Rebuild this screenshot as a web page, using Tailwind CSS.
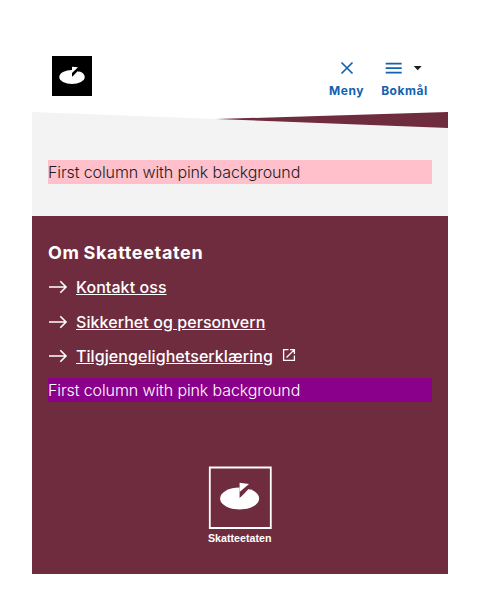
<!DOCTYPE html>
<html lang="nb">
<head>
<meta charset="utf-8">
<title>Skatteetaten</title>
<script src="https://cdn.jsdelivr.net/npm/@tailwindcss/browser@4"></script>
</head>
<body class="bg-white p-8 font-['Inter',sans-serif] text-base text-[#1d1d1d]">
<header class="flex h-20 items-start justify-between pt-6 pr-5 pl-5">
  <svg class="block size-10" viewBox="0 0 40 40"><path fill="#000" d="M0 0h40v40H0z"/><ellipse cx="20" cy="21" rx="12.700" ry="6.900" fill="#fff"/><path d="M20 20.500V11h6l2.500 3.500-8 6z" fill="#000"/><path d="M20 10.800l6 .5-6 5.700zM25.500 15.300l3.500 1.500-9 4.500z" fill="#fff"/></svg>
  <nav class="flex gap-4 text-xs leading-4 font-bold tracking-[0.550px] text-[#1362ae]">
    <button class="flex flex-col items-center gap-[3px]">
      <svg class="block size-6 translate-x-px" viewBox="0 0 24 24" fill="none" stroke="currentColor" stroke-width="1.700"><path d="M6.500 6.500l11 11M17.500 6.500l-11 11"/></svg>
      <span>Meny</span>
    </button>
    <button class="flex translate-x-[0.500px] flex-col items-center gap-[3px]">
      <span class="flex translate-x-[1.200px]"><svg class="block size-6" viewBox="0 0 24 24" fill="none" stroke="currentColor" stroke-width="1.700"><path d="M4 7.700h16M4 12.200h16M4 16.700h16"/></svg><svg class="block size-6" viewBox="0 0 24 24" fill="#1d1d1d"><path d="M8 10h8l-4 4.300z"/></svg></span>
      <span>Bokmål</span>
    </button>
  </nav>
</header>
<main class="h-[104px] bg-[#f3f3f3]">
  <svg class="block h-4 w-full" viewBox="0 0 416 16" preserveAspectRatio="none"><path fill="#fff" d="M0 0h416v16z"/><path fill="#6f2c3f" d="M184 7.080L416 0v16z"/></svg>
  <div class="px-4 pt-8"><div class="h-6 bg-[#ffc0cb] leading-6 font-light tracking-[-0.110px]">First column with pink background</div></div>
</main>
<footer class="h-[358px] bg-[#6f2c3f] px-4 pt-[23px] text-white">
  <h2 class="text-lg leading-7 font-bold tracking-[0.650px] [word-spacing:-1px]">Om Skatteetaten</h2>
  <ul class="mt-2 flex flex-col gap-[10.600px] leading-6 font-medium tracking-[0.070px]">
    <li class="flex items-center gap-2"><svg class="size-5" viewBox="0 0 20 20" fill="none" stroke="currentColor" stroke-width="1.600"><path d="M1 10h17M12.300 4.300L18 10l-5.700 5.700"/></svg><a class="underline" href="#">Kontakt oss</a></li>
    <li class="flex items-center gap-2"><svg class="size-5" viewBox="0 0 20 20" fill="none" stroke="currentColor" stroke-width="1.600"><path d="M1 10h17M12.300 4.300L18 10l-5.700 5.700"/></svg><a class="underline" href="#">Sikkerhet og personvern</a></li>
    <li class="flex items-center gap-2"><svg class="size-5" viewBox="0 0 20 20" fill="none" stroke="currentColor" stroke-width="1.600"><path d="M1 10h17M12.300 4.300L18 10l-5.700 5.700"/></svg><a class="underline" href="#">Tilgjengelighetserklæring</a><svg class="-mt-0.5 size-4" viewBox="0 0 16 16" fill="none" stroke="currentColor" stroke-width="1.300"><path d="M7.500 2.600H2.600v10.800h10.800V8.500M9 2.600h4.400V7M13.400 2.600L5.500 10.500"/></svg></li>
  </ul>
  <div class="mt-[9.800px] h-6 bg-[#8b008b] leading-6 font-light tracking-[-0.110px]">First column with pink background</div>
  <div class="mt-16 flex justify-center">
    <svg class="block h-[84px] w-20 overflow-visible" viewBox="0 0 80 84"><path d="M9.800 1.500h61v60.500h-61z" fill="none" stroke="#fff" stroke-width="1.800"/><ellipse cx="39.600" cy="32.500" rx="19.500" ry="11" fill="#fff"/><path d="M39.600 32.300V17h8l4 5.500-11.400 9z" fill="#6f2c3f"/><path d="M39.600 16.800l9.400 1.300-9.400 8zM48.500 23l5 2.500-13.900 7z" fill="#fff"/><text x="8" y="75.500" textLength="63.500" lengthAdjust="spacingAndGlyphs" font-family="Liberation Sans, sans-serif" font-size="11.500" font-weight="700" fill="#fff">Skatteetaten</text></svg>
  </div>
</footer>
</body>
</html>
